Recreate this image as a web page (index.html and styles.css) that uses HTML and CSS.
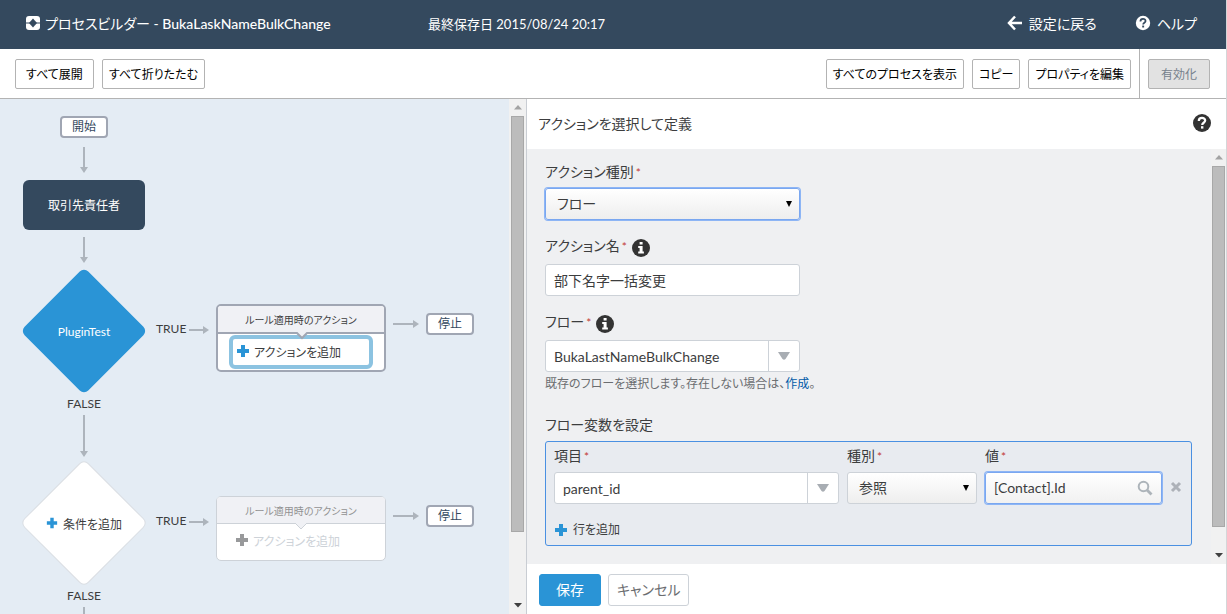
FILE: index.html
```html
<!DOCTYPE html>
<html lang="ja">
<head>
<meta charset="utf-8">
<title>プロセスビルダー - BukaLaskNameBulkChange</title>
<link rel="stylesheet" href="styles.css">
</head>
<body>
<svg class="defs" aria-hidden="true">
  <symbol id="plus" viewBox="0 0 14 14"><path d="M5 1h4v4h4v4h-4v4h-4v-4h-4v-4h4z" fill="currentColor"/></symbol>
  <symbol id="help" viewBox="0 0 20 20"><circle cx="10" cy="10" r="9" fill="currentColor"/><path class="mark" d="M6.8 8c0-2 1.400-3.100 3.200-3.100s3.200 1.100 3.200 2.700c0 2.100-3 2.200-3 4.300" fill="none" stroke-width="2.200"/><rect class="dot" x="9" y="13.200" width="2.400" height="2.400"/></symbol>
  <symbol id="info" viewBox="0 0 20 20"><circle cx="10" cy="10" r="9" fill="currentColor"/><path d="M8.600 4h3v2.500h-3zM7.200 8h4.400v5.600h1.300v1.900h-5.700v-1.900h1.400v-3.700h-1.400z" fill="#fff"/></symbol>
  <symbol id="down" viewBox="0 0 12 8"><path d="M0 0h12l-4.500 7q-1.500 1.500-3 0z" fill="currentColor"/></symbol>
  <symbol id="caret" viewBox="0 0 8 8"><path d="M1 1h6l-3 6z" fill="currentColor"/></symbol>
  <symbol id="up-arrow" viewBox="0 0 8 5"><path d="M4 0l4 4.500h-8z" fill="currentColor"/></symbol>
  <symbol id="down-arrow" viewBox="0 0 8 5"><path d="M0 0h8l-4 4.500z" fill="currentColor"/></symbol>
</svg>

<header class="topbar">
  <div class="brand">
    <svg width="14" height="14" viewBox="0 0 14 14"><rect width="14" height="14" rx="3" fill="#fff"/><path d="M0 6.500h14v1H0z" fill="#34495e"/><path d="M7 2.500l4 4.500-4 4.500-4-4.500z" fill="#34495e"/></svg>
    <h1>プロセスビルダー - <span class="name">BukaLaskNameBulkChange</span></h1>
  </div>
  <p class="saved">最終保存日 2015/08/24 20:17</p>
  <nav class="links">
    <a href="#setup"><svg width="16" height="16" viewBox="0 0 16 16"><path d="M8 1.500L2 8l6 6.500M2.500 8H15" fill="none" stroke="#fff" stroke-width="2.500"/></svg>設定に戻る</a>
    <a href="#help"><svg class="help-light" width="16" height="16"><use href="#help"/></svg>ヘルプ</a>
  </nav>
</header>

<div class="toolbar">
  <button type="button" class="expand">すべて展開</button>
  <button type="button">すべて折りたたむ</button>
  <span class="spacer"></span>
  <button type="button">すべてのプロセスを表示</button>
  <button type="button">コピー</button>
  <button type="button">プロパティを編集</button>
  <div class="activate"><button type="button" disabled>有効化</button></div>
</div>

<main class="workspace">
  <section class="flow">
    <div class="canvas">
      <svg class="wires" width="509" height="515" viewBox="0 0 509 515">
        <g fill="none" stroke="#adb4bc" stroke-width="2">
          <path d="M84 48v22M84 138v22M84 316v38M84 508v7M189 231h16M189 423h16M393 225h22M393 417h22"/>
        </g>
        <g fill="#adb4bc">
          <path d="M80 68h8l-4 6zM80 158h8l-4 6zM80 352h8l-4 6zM203 227v8l6-4zM203 419v8l6-4zM413 221v8l6-4zM413 413v8l6-4z"/>
        </g>
        <rect x="39" y="187" width="90" height="90" rx="6" transform="rotate(45 84 232)" fill="#2a94d6"/>
        <rect x="39" y="379" width="90" height="90" rx="6" transform="rotate(45 84 424)" fill="#fff" stroke="#dadee3"/>
      </svg>
      <div class="pill start">開始</div>
      <button type="button" class="object">取引先責任者</button>
      <button type="button" class="criteria first">PluginTest</button>
      <span class="branch true-first">TRUE</span>
      <span class="branch false-first">FALSE</span>
      <div class="card active">
        <h2>ルール適用時のアクション</h2>
        <svg class="notch" width="14" height="8" viewBox="0 0 14 8"><path d="M1 0l6 6 6-6" fill="#f0f1f5" stroke="#a0a6b3" stroke-width="2"/></svg>
        <button type="button"><svg width="14" height="14"><use href="#plus"/></svg>アクションを追加</button>
      </div>
      <div class="pill stop-first">停止</div>
      <button type="button" class="criteria second"><svg width="12" height="12"><use href="#plus"/></svg>条件を追加</button>
      <span class="branch true-second">TRUE</span>
      <span class="branch false-second">FALSE</span>
      <div class="card idle">
        <h2>ルール適用時のアクション</h2>
        <svg class="notch" width="14" height="8" viewBox="0 0 14 8"><path d="M1 0l6 6 6-6" fill="#f0f1f5" stroke="#cdd2d8"/></svg>
        <button type="button" disabled><svg width="14" height="14"><use href="#plus"/></svg>アクションを追加</button>
      </div>
      <div class="pill stop-second">停止</div>
    </div>
    <div class="scrollbar">
      <svg class="muted" width="8" height="5"><use href="#up-arrow"/></svg>
      <div class="thumb"></div>
      <svg width="8" height="5"><use href="#down-arrow"/></svg>
    </div>
  </section>

  <section class="panel">
    <div class="panel-head">
      <h2>アクションを選択して定義</h2>
      <svg class="help-dark" width="20" height="20"><use href="#help"/></svg>
    </div>
    <div class="panel-body">
      <form class="fields">
        <div class="field">
          <label for="type">アクション種別<i>*</i></label>
          <div class="select focus"><select id="type"><option>フロー</option></select><svg width="8" height="8"><use href="#caret"/></svg></div>
        </div>
        <div class="field with-info">
          <label for="name">アクション名<i>*</i></label><svg width="20" height="20"><use href="#info"/></svg>
          <input id="name" type="text" value="部下名字一括変更">
        </div>
        <div class="field with-info">
          <label for="flow">フロー<i>*</i></label><svg width="20" height="20"><use href="#info"/></svg>
          <div class="combo"><input id="flow" type="text" value="BukaLastNameBulkChange"><button type="button" aria-label="フローを選択"><svg width="12" height="8"><use href="#down"/></svg></button></div>
        </div>
        <p class="hint">既存のフローを選択します。存在しない場合は、<a href="#create">作成</a>。</p>
        <h3>フロー変数を設定</h3>
        <div class="variables">
          <div class="cell">
            <label for="item">項目<i>*</i></label>
            <div class="combo"><input id="item" type="text" value="parent_id"><button type="button" aria-label="項目を選択"><svg width="12" height="8"><use href="#down"/></svg></button></div>
          </div>
          <div class="cell">
            <label for="kind">種別<i>*</i></label>
            <div class="select"><select id="kind"><option>参照</option></select><svg width="8" height="8"><use href="#caret"/></svg></div>
          </div>
          <div class="cell">
            <label for="value">値<i>*</i></label>
            <div class="lookup focus"><input id="value" type="text" value="[Contact].Id"><button type="button" aria-label="検索"><svg width="16" height="16" viewBox="0 0 16 16" fill="none" stroke="#adb4ba"><circle cx="6.500" cy="6.500" r="4.800" stroke-width="2"/><path d="M10 10l4.500 4.500" stroke-width="2.800"/></svg></button></div>
          </div>
          <button type="button" class="remove" aria-label="行を削除"><svg width="12" height="12" viewBox="0 0 12 12"><path d="M2 2l8 8M10 2l-8 8" stroke="#adb1b8" stroke-width="3"/></svg></button>
          <button type="button" class="add"><svg width="14" height="14"><use href="#plus"/></svg>行を追加</button>
        </div>
      </form>
      <div class="scrollbar">
        <svg class="muted" width="8" height="5"><use href="#up-arrow"/></svg>
        <div class="thumb"></div>
        <svg width="8" height="5"><use href="#down-arrow"/></svg>
      </div>
    </div>
    <footer class="panel-foot">
      <button type="button" class="save">保存</button>
      <button type="button">キャンセル</button>
    </footer>
  </section>
</main>
</body>
</html>
```
FILE: styles.css
```css
* {
  box-sizing: border-box;
}

body {
  margin: 0;
  height: 100vh;
  display: flex;
  flex-direction: column;
  border-right: 1px solid #d4d6d8;
  overflow: hidden;
  background: #fff;
  color: #3c3d3e;
  font-family: Lato, "Noto Sans CJK JP", sans-serif;
  font-size: 14px;
  font-feature-settings: "palt";
}

h1, h2, h3, p {
  margin: 0;
  font-size: inherit;
  font-weight: 400;
}

button, input, select {
  margin: 0;
  padding: 0;
  border: 0;
  background: none;
  color: inherit;
  font: inherit;
  font-feature-settings: inherit;
}

svg {
  display: block;
  flex: none;
}

.defs {
  display: none;
}

.topbar {
  display: grid;
  grid-template-columns: 402px 1fr auto;
  align-items: center;
  flex: none;
  height: 49px;
  padding: 0 29px 3px 26px;
  background: #34495e;
  color: #fff;
}

.brand, .links, .links a {
  display: flex;
  align-items: center;
}

.brand {
  gap: 5px;
}

.name {
  font-weight: 500;
}

.saved {
  font-size: 13px;
}

.links {
  gap: 38px;
}

.links a {
  gap: 6px;
  color: #fff;
  text-decoration: none;
}

.help-light, .help-dark {
  --mark: #34495e;
  color: #fff;
}

.help-dark {
  --mark: #fff;
  color: #333;
}

.mark {
  stroke: var(--mark);
}

.dot {
  fill: var(--mark);
}

.toolbar {
  display: flex;
  align-items: center;
  gap: 8px;
  flex: none;
  height: 50px;
  padding: 0 16px 0 15px;
  border-bottom: 1px solid #b3b3b3;
}

.toolbar button {
  height: 30px;
  padding: 0 6px;
  border: 1px solid #b3b3b3;
  border-radius: 2px;
  background: #fff;
  color: #000;
  font-size: 12px;
}

.toolbar .expand {
  padding: 0 10px;
}

.spacer {
  flex: 1;
}

.activate {
  display: flex;
  align-items: center;
  align-self: stretch;
  padding-left: 8px;
  border-left: 1px solid #b3b3b3;
}

.activate button {
  padding: 0 12px;
  background: #e2e2e2;
  color: #76818c;
}

.workspace {
  display: grid;
  grid-template-columns: 526fr 700fr;
  flex: 1;
  min-height: 0;
}

.flow {
  display: flex;
  min-width: 0;
  background: #e4ecf4;
}

.canvas {
  position: relative;
  flex: 1;
  overflow: hidden;
  font-size: 12px;
}

.wires, .canvas > div, .canvas > button, .branch {
  position: absolute;
}

.wires {
  left: 0;
  top: 0;
}

.pill {
  width: 48px;
  height: 22px;
  border: 2px solid #a0a6b3;
  border-radius: 4px;
  background: #fff;
  color: #34495e;
  line-height: 18px;
  text-align: center;
}

.start {
  left: 60px;
  top: 17px;
}

.stop-first {
  left: 426px;
  top: 214px;
}

.stop-second {
  left: 426px;
  top: 406px;
}

.object {
  left: 23px;
  top: 81px;
  width: 122px;
  height: 50px;
  padding-bottom: 2px;
  border-radius: 6px;
  background: #34495e;
  color: #fff;
}

.criteria {
  display: flex;
  align-items: center;
  justify-content: center;
  gap: 5px;
  left: 34px;
  width: 100px;
  height: 30px;
}

.criteria svg, .card button svg, .add svg {
  color: #2a94d6;
}

.first {
  top: 217px;
  color: #fff;
}

.second {
  top: 409px;
}

.branch {
  line-height: 16px;
}

.true-first, .true-second {
  left: 156px;
}

.false-first, .false-second {
  left: 54px;
  width: 60px;
  text-align: center;
}

.true-first {
  top: 222px;
}

.true-second {
  top: 414px;
}

.false-first {
  top: 297px;
}

.false-second {
  top: 489px;
}

.card {
  left: 216px;
  width: 170px;
  border: 2px solid #a0a6b3;
  border-radius: 5px;
  background: #fff;
}

.card h2 {
  height: 28px;
  border-bottom: 2px solid #a0a6b3;
  border-radius: 3px 3px 0 0;
  background: #f0f1f5;
  font-size: 10px;
  line-height: 28px;
  text-align: center;
}

.notch {
  position: absolute;
  left: 77px;
  top: 26px;
}

.card button {
  display: flex;
  align-items: center;
  gap: 4px;
  width: 144px;
  height: 34px;
  margin: 1px 11px;
  padding: 0 3px 2px;
  border: 4px solid #8cc3e1;
  border-radius: 6px;
  font-size: 12px;
}

.active {
  top: 205px;
}

.idle {
  top: 397px;
  border: 1px solid #cdd2d8;
}

.card.idle h2 {
  height: 27px;
  border-bottom: 1px solid #cdd2d8;
  color: #929292;
}

.card.idle button {
  padding-bottom: 4px;
  border-color: transparent;
  color: #cdd2d8;
}

.card.idle button svg {
  color: #98999b;
}

.scrollbar {
  display: flex;
  flex-direction: column;
  align-items: center;
  gap: 6px;
  flex: none;
  width: 17px;
  padding: 6px 0;
  background: #f1f1f1;
  color: #404040;
}

.scrollbar .muted {
  color: #a3a3a3;
}

.thumb {
  flex: 1;
  width: 13px;
  margin-bottom: 65px;
  border: 1px solid #a8a8a8;
  background: #bcbcbc;
}

.panel {
  display: flex;
  flex-direction: column;
  min-width: 0;
  border-left: 1px solid #c9cdd3;
}

.panel-head {
  display: flex;
  align-items: center;
  justify-content: space-between;
  flex: none;
  height: 50px;
  padding: 0 14px 2px 11px;
}

.panel-body {
  display: flex;
  flex: 1;
  min-height: 0;
  background: #eff0f2;
}

.panel-body .scrollbar {
  width: 15px;
}

.panel-body .thumb {
  margin-bottom: 20px;
}

.fields {
  flex: 1;
  min-width: 0;
  padding: 11px 19px 0 18px;
}

.field {
  display: grid;
  grid-template-columns: auto 1fr;
  gap: 4px;
  margin-bottom: 16px;
}

.field label {
  height: 24px;
  line-height: 24px;
}

label i {
  margin-left: 2px;
  color: #c23934;
  font-style: normal;
  font-size: 12px;
}

.with-info svg {
  color: #333;
}

.field.with-info label {
  line-height: 20px;
}

.with-info > svg {
  margin-top: 2px;
}

.field > input, .field > div {
  grid-column: 1 / -1;
  width: 255px;
}

.field > input, .combo, .select, .lookup {
  height: 32px;
  border: 1px solid #cdd2d8;
  border-radius: 3px;
  background: #fff;
}

.field > input, .combo input, .lookup input {
  padding: 0 8px;
}

.combo, .select, .lookup {
  display: flex;
  align-items: center;
}

.combo input, .lookup input, .select select {
  flex: 1;
  min-width: 0;
  height: 30px;
  outline: none;
}

.combo button {
  display: flex;
  align-items: center;
  justify-content: center;
  width: 31px;
  height: 30px;
  border-left: 1px solid #cdd2d8;
}

.combo button svg {
  color: #a8adb3;
}

.select {
  position: relative;
  background: linear-gradient(#fff, #eee);
}

.select select {
  appearance: none;
  padding: 0 11px 2px;
}

.select svg {
  position: absolute;
  right: 6px;
  color: #000;
  pointer-events: none;
}

.lookup {
  padding-right: 8px;
  background: linear-gradient(#fff, #f1f1f1);
}

.lookup input {
  padding-bottom: 2px;
}

.focus {
  border-color: #7aa7f0;
  box-shadow: 0 0 0 1px #8db5f5;
}

.hint {
  margin-top: -16px;
  color: #6b6d70;
  font-size: 12px;
  line-height: 24px;
}

.hint a {
  color: #015ba7;
  text-decoration: none;
}

h3 {
  margin: 17px 0 4px;
  line-height: 24px;
}

.variables {
  display: grid;
  grid-template-columns: 1fr 130px 177px 12px;
  gap: 8px;
  padding: 4px 9px 5px 8px;
  border: 1px solid #4a90e2;
  border-radius: 3px;
  background: #e8ebf0;
}

.cell label {
  display: block;
  height: 20px;
  margin-bottom: 6px;
  line-height: 20px;
}

.remove {
  align-self: end;
  margin-bottom: 11px;
}

.add {
  display: flex;
  align-items: center;
  gap: 5px;
  justify-self: start;
  margin-top: 8px;
  line-height: 20px;
  font-size: 12px;
}

.panel-foot {
  display: flex;
  align-items: center;
  gap: 7px;
  flex: none;
  height: 50px;
  padding: 2px 12px 0;
}

.panel-foot button {
  height: 32px;
  padding: 0 8px 2px;
  border: 1px solid #cdd2d8;
  border-radius: 3px;
  color: #6b6d70;
}

.panel-foot .save {
  padding: 0 16px 2px;
  border-color: #2a94d6;
  background: #2a94d6;
  color: #fff;
}
```
